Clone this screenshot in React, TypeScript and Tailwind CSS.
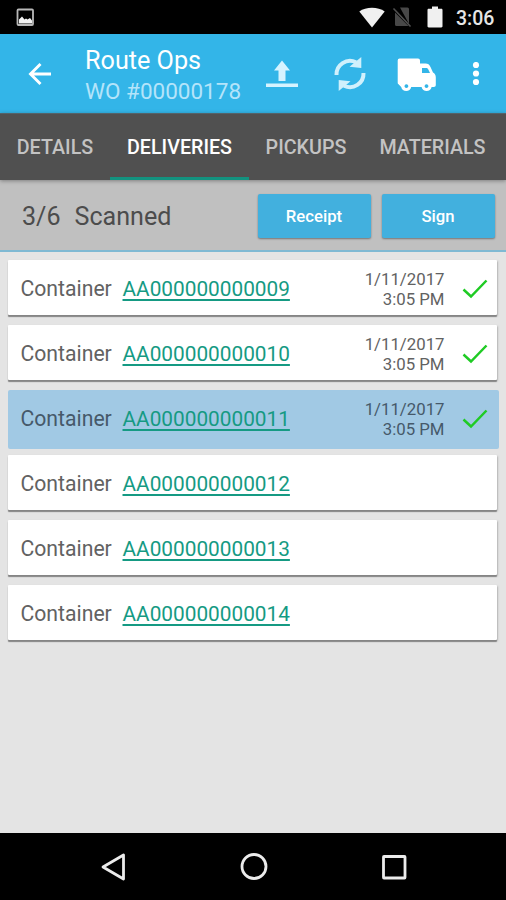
import React from "react";

interface Delivery {
  id: string;
  date?: string;
  time?: string;
  selected?: boolean;
}

const deliveries: Delivery[] = [
  { id: "AA000000000009", date: "1/11/2017", time: "3:05 PM" },
  { id: "AA000000000010", date: "1/11/2017", time: "3:05 PM" },
  { id: "AA000000000011", date: "1/11/2017", time: "3:05 PM", selected: true },
  { id: "AA000000000012" },
  { id: "AA000000000013" },
  { id: "AA000000000014" },
];

const tabs = [
  { label: "DETAILS", width: "w-[110px]" },
  { label: "DELIVERIES", width: "w-[139px]", active: true },
  { label: "PICKUPS", width: "w-[114px]" },
  { label: "MATERIALS", width: "w-[139px]" },
];

const StatusBar = () => (
  <div className="flex h-[34px] items-center bg-black pl-4 pr-[10px]">
    <svg className="h-[19px] w-[19px]" viewBox="0 0 19 19">
      <rect x="1.5" y="1.5" width="15.5" height="15.5" rx="1" fill="none" stroke="#b8b8b8" strokeWidth="1.8" />
      <path d="M3 15.500v-4l3-3 2.500 3 1.500-1 1.500 1 2.500-1.500 2 2.500v3z" fill="#f2f2f2" />
    </svg>
    <div className="ml-auto flex items-center">
      <svg className="h-[21px] w-[26px]" viewBox="0 0 26 21">
        <path d="M.3 4.400C7-.6 19-.6 25.700 4.400L13 20.500z" fill="#f0f0f0" />
      </svg>
      <svg className="ml-[7px] h-[22px] w-5" viewBox="0 0 20 22">
        <path d="M8 1.500h7.500a1.500 1.500 0 0 1 1.500 1.500v15zM3 6.500l13.500 13.500H4.500A1.500 1.500 0 0 1 3 18.500z" fill="#484848" />
        <path d="M1.500 2.500l17 18" stroke="#505050" strokeWidth="1.600" />
      </svg>
      <svg className="ml-[15px] h-[22px] w-4" viewBox="0 0 16 22">
        <path d="M5 .5h6v2.300h3.300c.7 0 1.200.5 1.200 1.200v16.300c0 .7-.5 1.200-1.200 1.200H1.700c-.7 0-1.200-.5-1.200-1.200V4c0-.7.5-1.200 1.200-1.200H5z" fill="#f0f0f0" />
      </svg>
      <span className="ml-[13px] w-[40px] whitespace-nowrap pt-[3px] text-[19.500px] font-medium leading-none text-[#e6e6e6]">
        3:06
      </span>
    </div>
  </div>
);

const AppBar = () => (
  <div className="flex h-[79px] items-center bg-[#33b5e8] pl-[28px]">
    <svg className="h-6 w-6" viewBox="0 0 24 24">
      <path d="M12.500 2L2.500 12l10 10M2.500 12H23" fill="none" stroke="#fff" strokeWidth="2.900" />
    </svg>
    <div className="ml-[33px] w-[172px] whitespace-nowrap pt-[4px]">
      <h1 className="text-[25.200px] leading-[31px] text-white">Route Ops</h1>
      <p className="text-[22.500px] leading-[30px] text-[#b4e4fa]">WO #00000178</p>
    </div>
    <svg className="ml-[8px] h-[34px] w-[34px]" viewBox="0 0 34 34">
      <path d="M17 3.500l8 10h-4.500V24h-7V13.500H9z" fill="#d6f3ff" />
      <path d="M1 26.500h32v3.500H1z" fill="#d6f3ff" />
    </svg>
    <svg className="ml-[34px] h-[36px] w-[34px]" viewBox="0 0 34 36">
      <g fill="none" stroke="#d0f0fc" strokeWidth="4">
        <path d="M3.500 19A13.500 13.500 0 0 1 23 6.300" />
        <path d="M30.500 17A13.500 13.500 0 0 1 11 29.700" />
      </g>
      <path d="M28.300 1v11L16.500 10.800zM5.700 35V24l11.800 1.200z" fill="#d0f0fc" />
    </svg>
    <svg className="ml-[30px] h-[34px] w-[40px]" viewBox="0 0 40 34">
      <path
        fillRule="evenodd"
        d="M2.500 1.500h18.500a2 2 0 0 1 2 2V6.500h5.500c2.500 0 4 1 5 3.500l2.500 5.500c1.800 1 2.800 2.500 2.800 5v7.500c0 1.300-.7 2-2 2h-2.200c-.5 2.500-2.500 4-5 4s-4.500-1.500-5-4H14.200c-.5 2.500-2.500 4-5 4s-4.500-1.500-5-4L1.800 27.500C1 27 .7 26.500.7 25.500v-22a2 2 0 0 1 1.800-2zM25 11v5h8l-1.700-3.500c-.5-1-1-1.500-2-1.500zM9.400 27.200a1.900 1.900 0 1 0 .01 0zM29.500 27.200a1.900 1.900 0 1 0 .01 0z"
        fill="#fff"
      />
    </svg>
    <svg className="ml-[35px] h-[24px] w-[8px]" viewBox="0 0 8 24">
      <circle cx="4" cy="3" r="3.100" fill="#fff" />
      <circle cx="4" cy="11.500" r="3.100" fill="#fff" />
      <circle cx="4" cy="20" r="3.100" fill="#fff" />
    </svg>
  </div>
);

const TabBar = () => (
  <div className="relative z-10 flex h-[67px] border-t border-[#54636a] bg-[#505050] shadow-[0_1px_4px_rgba(0,0,0,0.35)]">
    {tabs.map((tab) => (
      <div
        key={tab.label}
        className={`flex items-center justify-center border-b-[3px] pt-[5px] text-[19.700px] font-medium ${tab.width} ${
          tab.active ? "border-[#12927f] text-white" : "border-transparent text-[#c3c3c3]"
        }`}
      >
        {tab.label}
      </div>
    ))}
  </div>
);

const ActionButton = ({ label }: { label: string }) => (
  <button className="h-11 w-[113px] rounded-[2px] bg-[#42b0de] pt-[1px] text-[16.700px] font-medium text-white shadow-[0_1px_2px_rgba(0,0,0,0.4)]">
    {label}
  </button>
);

const ScanSummary = () => (
  <div className="flex h-[72px] items-center border-b-2 border-[#7fb9d3] bg-[#c0c0c0] pl-[22px] pr-[11.500px] pt-[2px]">
    <p className="flex gap-[14px] whitespace-nowrap pt-[2px] text-[25.100px] text-[#4c4c4c]">
      <span>3/6</span>
      <span>Scanned</span>
    </p>
    <div className="ml-auto flex gap-[11px]">
      <ActionButton label="Receipt" />
      <ActionButton label="Sign" />
    </div>
  </div>
);

const DeliveryRow = ({ id, date, time, selected }: Delivery) => (
  <div
    className={`flex items-center whitespace-nowrap pl-[12.500px] ${
      selected
        ? "-mr-[2px] mb-[6px] h-[59px] rounded-[2px] bg-[#a1c9e4] pb-[1px] pr-[11.500px] text-[#46596a]"
        : "mb-[10px] h-[55px] rounded-[1px] bg-white pr-[9.500px] pt-[3px] text-[#626262] shadow-[0_2px_1px_#858585,1px_1px_2px_#bbb]"
    }`}
  >
    <span className="w-[102px] pt-[1px] text-[21.200px]">Container</span>
    <span className="pt-[2px] text-[20.800px] text-[#159a83] underline decoration-[1.500px] underline-offset-[2.500px]">
      {id}
    </span>
    {date && (
      <div className="ml-auto flex items-center">
        <div className="text-right text-[16.800px] leading-[20px]">
          <p>{date}</p>
          <p>{time}</p>
        </div>
        <svg className="ml-[17px] h-[20px] w-[26px]" viewBox="0 0 26 20">
          <path d="M1.500 10.500L9 17.500 24.500 1.500" fill="none" stroke="#1fcb24" strokeWidth="2.500" />
        </svg>
      </div>
    )}
  </div>
);

const NavBar = () => (
  <div className="flex h-[67px] items-center justify-between bg-black pl-[99px] pr-[98px]">
    <svg className="h-7 w-7" viewBox="0 0 28 28">
      <path d="M24.500 2v24L4 14z" fill="none" stroke="#ececec" strokeWidth="2.800" strokeLinejoin="round" />
    </svg>
    <svg className="h-7 w-7" viewBox="0 0 28 28">
      <circle cx="14" cy="13.500" r="12" fill="none" stroke="#ececec" strokeWidth="2.800" />
    </svg>
    <svg className="h-7 w-7" viewBox="0 0 28 28">
      <rect x="3.500" y="3.500" width="21.500" height="21.500" rx="0.500" fill="none" stroke="#ececec" strokeWidth="2.800" />
    </svg>
  </div>
);

const App = () => {
  return (
    <div className="flex h-[900px] w-[506px] flex-col overflow-hidden bg-[#e4e4e4] font-['Roboto',sans-serif]">
      <StatusBar />
      <AppBar />
      <TabBar />
      <ScanSummary />
      <div className="flex-1 pl-[8px] pr-[9px] pt-[7.500px]">
        {deliveries.map((delivery) => (
          <DeliveryRow key={delivery.id} {...delivery} />
        ))}
      </div>
      <NavBar />
    </div>
  );
};

export default App;
